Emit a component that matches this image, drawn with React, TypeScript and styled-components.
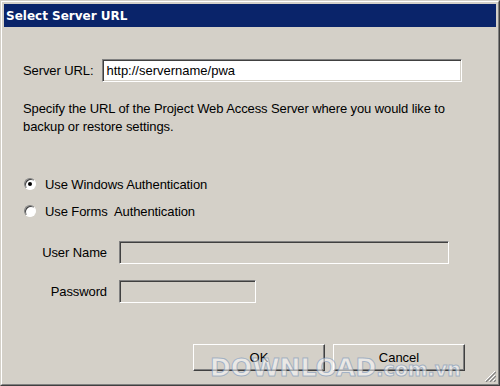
import styled, { createGlobalStyle } from "styled-components";

const GlobalStyle = createGlobalStyle`
  html, body {
    margin: 0;
    padding: 0;
    background: #d4d0c8;
  }
  body {
    font-family: "Liberation Sans", Arial, sans-serif;
    font-size: 13px;
    letter-spacing: -0.1px;
    color: #000;
  }
`;

function App() {
  return (
    <>
      <GlobalStyle />
      <Frame>
        <Inner>
          <TitleBar>Select Server URL</TitleBar>
          <Body>
            <UrlRow>
              <label>Server URL:</label>
              <TextBox defaultValue="http://servername/pwa" $width={360} />
            </UrlRow>
            <Description>
              Specify the URL of the Project Web Access Server where you would like to
              <br />
              backup or restore settings.
            </Description>
            <Options>
              <RadioRow>
                <Radio $checked />
                <span>Use Windows Authentication</span>
              </RadioRow>
              <RadioRow>
                <Radio />
                <span>Use Forms&nbsp; Authentication</span>
              </RadioRow>
            </Options>
            <Credentials>
              <FieldRow>
                <FieldLabel>User Name</FieldLabel>
                <TextBox disabled $width={330} />
              </FieldRow>
              <FieldRow>
                <FieldLabel>Password</FieldLabel>
                <TextBox disabled type="password" $width={137} />
              </FieldRow>
            </Credentials>
            <Buttons>
              <Button>OK</Button>
              <Button>Cancel</Button>
            </Buttons>
          </Body>
          <Grip width="12" height="12" viewBox="0 0 12 12">
            <path d="M11 1 L1 11 M11 5 L5 11 M11 9 L9 11" stroke="#fff" strokeWidth="1" />
            <path d="M12 2 L2 12 M12 6 L6 12 M12 10 L10 12" stroke="#808080" strokeWidth="1.2" />
          </Grip>
          <Watermark>
            DOWNLOAD<small>.com.vn</small>
          </Watermark>
        </Inner>
      </Frame>
    </>
  );
}

export default App;

const Frame = styled.div`
  width: 500px;
  height: 386px;
  box-sizing: border-box;
  border: 1px solid;
  border-color: #d4d0c8 #404040 #404040 #d4d0c8;
  overflow: hidden;
`;

const Inner = styled.div`
  position: relative;
  height: 100%;
  box-sizing: border-box;
  border: 1px solid;
  border-color: #fff #808080 #808080 #fff;
  padding: 2px;
  display: flex;
  flex-direction: column;
`;

const TitleBar = styled.div`
  height: 23px;
  background: #0a246a;
  color: #fff;
  font-family: "DejaVu Sans", Tahoma, sans-serif;
  font-weight: bold;
  font-size: 12px;
  letter-spacing: 0;
  display: flex;
  align-items: center;
  padding-left: 2px;
`;

const Body = styled.div`
  flex: 1;
  padding: 32px 0 0 19px;
  display: flex;
  flex-direction: column;
`;

const UrlRow = styled.div`
  display: flex;
  align-items: center;
  gap: 9px;
`;

const TextBox = styled.input<{ $width: number }>`
  width: ${(p) => p.$width}px;
  height: 23px;
  box-sizing: border-box;
  margin: 0;
  padding: 0 3px;
  font: inherit;
  color: #000;
  background: #fff;
  border: 1px solid;
  border-color: #808080 #fff #fff #808080;
  box-shadow: inset 1px 1px #404040, inset -1px -1px #d4d0c8;
  outline: none;

  &:disabled {
    background: #d4d0c8;
  }
`;

const Description = styled.p`
  margin: 18px 0 0;
  line-height: 18px;
`;

const Options = styled.div`
  margin-top: 38px;
  display: flex;
  flex-direction: column;
  gap: 7px;
`;

const RadioRow = styled.div`
  height: 20px;
  display: flex;
  align-items: center;
  gap: 9px;
  padding-left: 1px;
`;

const Radio = styled.span<{ $checked?: boolean }>`
  position: relative;
  width: 12px;
  height: 12px;
  box-sizing: border-box;
  border-radius: 50%;
  background: #fff;
  border: 1px solid;
  border-color: #808080 #fff #fff #808080;
  box-shadow: inset 1px 1px #404040;

  &::after {
    content: "";
    display: ${(p) => (p.$checked ? "block" : "none")};
    position: absolute;
    left: 3px;
    top: 3px;
    width: 4px;
    height: 4px;
    border-radius: 50%;
    background: #000;
  }
`;

const Credentials = styled.div`
  margin-top: 20px;
  display: flex;
  flex-direction: column;
  gap: 16px;
`;

const FieldRow = styled.div`
  display: flex;
  align-items: center;
  gap: 12px;
`;

const FieldLabel = styled.span`
  width: 84px;
  text-align: right;
`;

const Buttons = styled.div`
  margin-top: 41px;
  display: flex;
  gap: 8px;
  padding-left: 170px;
`;

const Button = styled.button`
  width: 132px;
  height: 27px;
  box-sizing: border-box;
  font: inherit;
  color: #000;
  background: #d4d0c8;
  border: 1px solid;
  border-color: #fff #404040 #404040 #fff;
  box-shadow: inset -1px -1px #808080, inset 1px 1px #d4d0c8;
  padding: 0;
`;

const Grip = styled.svg`
  position: absolute;
  right: 2px;
  bottom: 2px;
`;

const Watermark = styled.div`
  position: absolute;
  left: 208px;
  bottom: 0;
  line-height: 30px;
  font-family: "DejaVu Sans", sans-serif;
  font-weight: bold;
  font-size: 25px;
  letter-spacing: 0;
  white-space: nowrap;
  color: rgba(255, 255, 255, 0.55);
  -webkit-text-stroke: 1px rgba(110, 140, 180, 0.55);
  pointer-events: none;

  small {
    font-size: 19px;
  }
`;
